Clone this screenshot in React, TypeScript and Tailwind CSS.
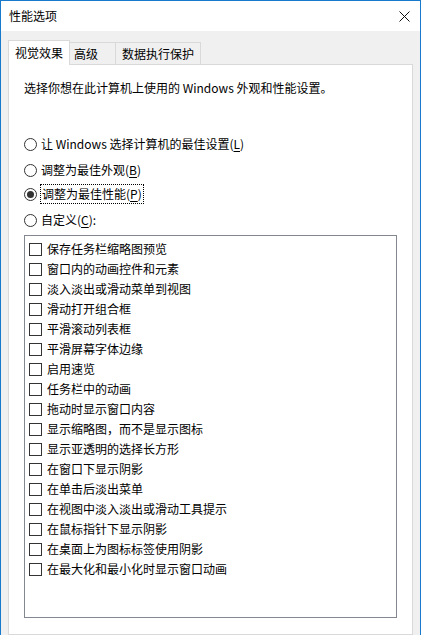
import React from "react";

const effects = [
  "保存任务栏缩略图预览",
  "窗口内的动画控件和元素",
  "淡入淡出或滑动菜单到视图",
  "滑动打开组合框",
  "平滑滚动列表框",
  "平滑屏幕字体边缘",
  "启用速览",
  "任务栏中的动画",
  "拖动时显示窗口内容",
  "显示缩略图，而不是显示图标",
  "显示亚透明的选择长方形",
  "在窗口下显示阴影",
  "在单击后淡出菜单",
  "在视图中淡入淡出或滑动工具提示",
  "在鼠标指针下显示阴影",
  "在桌面上为图标标签使用阴影",
  "在最大化和最小化时显示窗口动画",
];

function Radio({
  checked,
  children,
  focused,
  className = "",
}: {
  checked?: boolean;
  children: React.ReactNode;
  focused?: boolean;
  className?: string;
}) {
  return (
    <div className={"flex h-[20px] items-center " + className}>
      <span className="flex h-[13px] w-[13px] shrink-0 items-center justify-center rounded-full border border-[#333333] bg-white">
        {checked && <span className="h-[7px] w-[7px] rounded-full bg-[#333333]" />}
      </span>
      <span
        className={
          focused
            ? "ml-[3px] border border-dotted border-black px-[1px] leading-[18px]"
            : "ml-[4px] leading-[18px]"
        }
      >
        {children}
      </span>
    </div>
  );
}

function Key({ k }: { k: string }) {
  return <span className="underline underline-offset-2">{k}</span>;
}

export default function App() {
  return (
    <div
      className="flex h-[635px] w-[421px] flex-col overflow-hidden border-x border-t border-[#1979ca] bg-[#f0f0f0] text-[12px] text-black"
      style={{ fontFamily: '"Noto Sans CJK SC", "Noto Sans", sans-serif' }}
    >
      {/* title bar */}
      <div className="flex h-[30px] shrink-0 items-center justify-between bg-white pl-[8px] pr-[9px]">
        <span>性能选项</span>
        <svg width="11" height="11" viewBox="0 0 11 11" className="mr-[1px]">
          <path d="M0.5 0.5 L10.5 10.5 M10.5 0.5 L0.5 10.5" stroke="#111" strokeWidth="1" />
        </svg>
      </div>

      <div className="flex flex-1 flex-col px-[7px] pt-[9px]">
        {/* tabs */}
        <div className="relative z-10 flex items-end">
          <div className="-mb-px flex h-[25px] items-center border-x border-t border-[#d9d9d9] bg-white px-[6px]">
            视觉效果
          </div>
          <div className="flex h-[22px] items-center border-r border-t border-[#d9d9d9] bg-[#f0f0f0] px-[4px] pr-[17px]">
            高级
          </div>
          <div className="flex h-[22px] items-center border-r border-t border-[#d9d9d9] bg-[#f0f0f0] px-[6px]">
            数据执行保护
          </div>
        </div>

        {/* panel */}
        <div className="flex flex-1 flex-col border border-[#d9d9d9] bg-white pl-[15px] pr-[12px] pt-[15px]">
          <p className="leading-[16px]">选择你想在此计算机上使用的 Windows 外观和性能设置。</p>

          <div className="mt-[38px] flex flex-col">
            <Radio>
              让 Windows 选择计算机的最佳设置(<Key k="L" />)
            </Radio>
            <Radio className="mt-[6px]">
              调整为最佳外观(<Key k="B" />)
            </Radio>
            <Radio checked focused className="mt-[4px]">
              调整为最佳性能(<Key k="P" />)
            </Radio>
            <Radio className="mt-[6px]">
              自定义(<Key k="C" />):
            </Radio>
          </div>

          <div className="mt-[5px] h-[383px] w-[373px] border border-[#828790] bg-white pl-[4px] pt-[3px]">
            {effects.map((e) => (
              <div key={e} className="flex h-[20px] items-center">
                <span className="h-[13px] w-[13px] shrink-0 border border-[#333333] bg-white" />
                <span className="ml-[5px] leading-[16px]">{e}</span>
              </div>
            ))}
          </div>
        </div>
      </div>
    </div>
  );
}
